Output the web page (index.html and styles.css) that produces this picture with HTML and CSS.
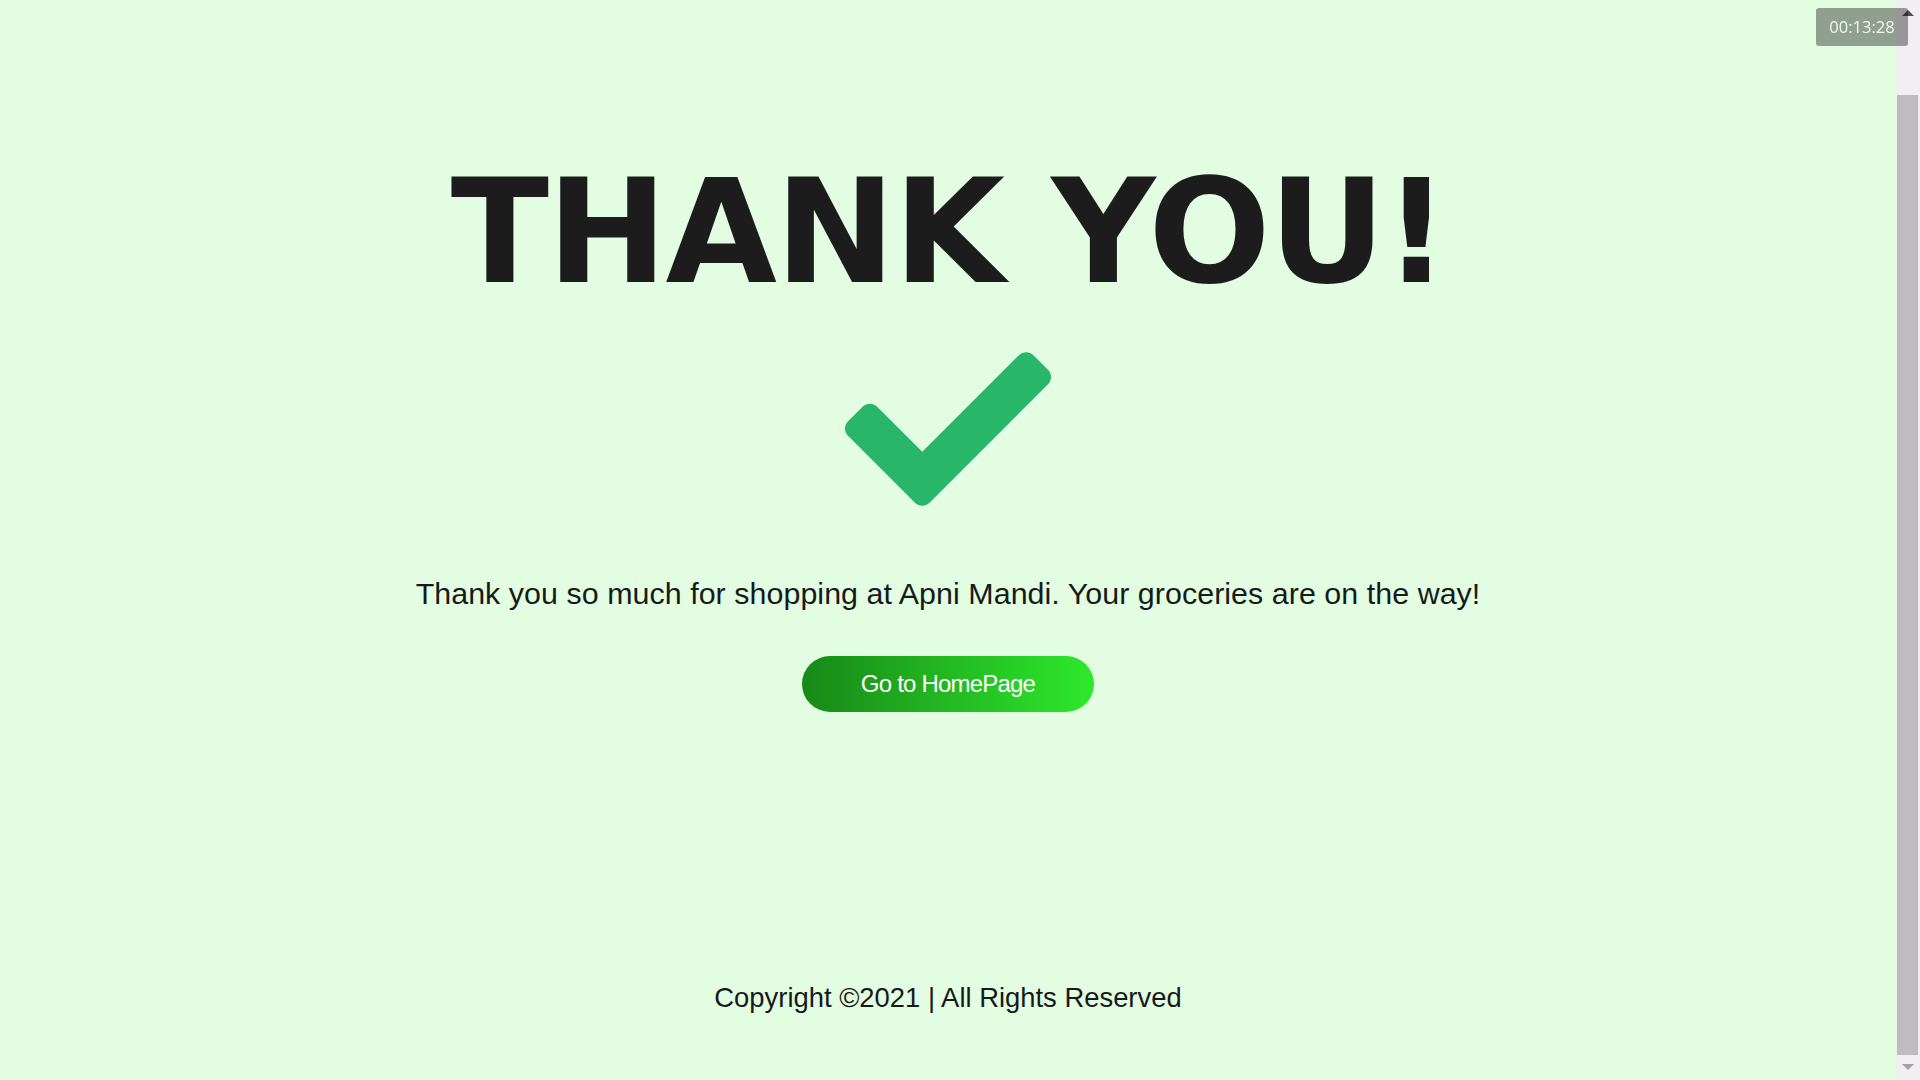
FILE: index.html
```html
<!DOCTYPE html>
<html lang="en">
<head>
<meta charset="utf-8">
<title>Thank You - Apni Mandi</title>
<link rel="stylesheet" href="styles.css">
</head>
<body>
<div class="page">
  <main class="thanks">
    <h1 class="title">THANK YOU!</h1>
    <svg class="check" viewBox="0 65 512 382" xmlns="http://www.w3.org/2000/svg" aria-hidden="true">
      <path d="M173.898 439.404l-166.4-166.4c-9.997-9.997-9.997-26.206 0-36.204l36.203-36.204c9.997-9.998 26.207-9.998 36.204 0L192 312.69 432.095 72.596c9.997-9.997 26.207-9.997 36.204 0l36.203 36.204c9.997 9.997 9.997 26.206 0 36.204l-294.4 294.401c-9.998 9.997-26.207 9.997-36.204-.001z"/>
    </svg>
    <p class="message">Thank you so much for shopping at Apni Mandi. Your groceries are on the way!</p>
    <a class="home-btn" href="#">Go to HomePage</a>
  </main>
  <footer class="footer">Copyright ©2021 | All Rights Reserved</footer>
</div>

<div class="scrollbar" aria-hidden="true">
  <span class="sb-arrow sb-up"></span>
  <span class="sb-thumb"></span>
  <span class="sb-arrow sb-down"></span>
</div>
<div class="timer">00:13:28</div>
</body>
</html>
```

FILE: styles.css
```css
html, body {
  margin: 0;
  padding: 0;
  height: 100%;
  overflow: hidden;
}

body {
  background: #e3fde2;
  color: #161a19;
  font-family: "Liberation Sans", Arial, sans-serif;
}

.page {
  width: calc(100% - 24px);
  display: flex;
  flex-direction: column;
  align-items: center;
}

.thanks {
  display: flex;
  flex-direction: column;
  align-items: center;
}

.title {
  margin: 160px 0 0;
  padding-left: 2px;
  font-family: "DejaVu Sans", sans-serif;
  font-weight: 700;
  font-size: 144px;
  line-height: 144px;
  color: #1c1c1c;
  letter-spacing: -2px;
}

.check {
  margin-top: 47px;
  width: 206px;
  height: 156px;
  fill: #2ab66a;
  display: block;
}

.message {
  margin: 68px 0 0;
  font-size: 30.4px;
  line-height: 36px;
  letter-spacing: 0.05px;
  color: #161a19;
}

.home-btn {
  margin-top: 45px;
  display: block;
  height: 56px;
  line-height: 56px;
  padding: 0 59px;
  border-radius: 28px;
  background: linear-gradient(to right, #188818, #2ee92b);
  color: #ffffff;
  font-size: 24px;
  letter-spacing: -0.8px;
  text-decoration: none;
}

.footer {
  margin-top: 269px;
  font-size: 27.4px;
  line-height: 33px;
  color: #161a19;
}

.scrollbar {
  position: fixed;
  top: 0;
  right: 0;
  width: 24px;
  height: 100%;
  background: #f1eff1;
}

.sb-thumb {
  position: absolute;
  left: 1px;
  right: 2px;
  top: 95px;
  height: 960px;
  background: #bebcbe;
}

.sb-arrow {
  position: absolute;
  left: 6px;
  width: 0;
  height: 0;
  border-left: 6px solid transparent;
  border-right: 6px solid transparent;
}

.sb-up {
  top: 10px;
  border-bottom: 6px solid #505050;
}

.sb-down {
  bottom: 10px;
  border-top: 6px solid #a3a3a3;
}

.timer {
  position: fixed;
  top: 8px;
  left: 1816px;
  width: 92px;
  height: 38px;
  line-height: 38px;
  border-radius: 3px;
  background: rgba(0, 0, 0, 0.37);
  color: #f4f4f4;
  font-family: "Open Sans", sans-serif;
  font-size: 16.5px;
  text-align: center;
}
```
